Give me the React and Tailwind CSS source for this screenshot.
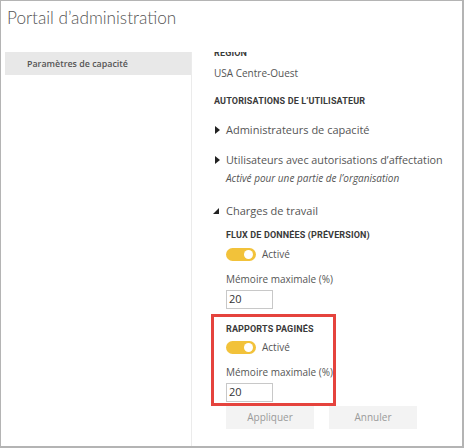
import React from "react";

const font = { fontFamily: "'Open Sans', 'Noto Sans', sans-serif" };

const Caret = ({ open }) =>
  open ? (
    <svg width="6" height="6" viewBox="0 0 6 6" className="shrink-0">
      <path d="M6 0 L6 6 L0 6 Z" fill="#222" />
    </svg>
  ) : (
    <svg width="5" height="8" viewBox="0 0 5 8" className="shrink-0">
      <path d="M0 0 L5 4 L0 8 Z" fill="#222" />
    </svg>
  );

const Toggle = () => (
  <div className="flex items-center h-[13px] gap-[6px]">
    <div className="w-[30px] h-[13px] rounded-full bg-[#f2c23a] flex items-center justify-end pr-[3px]">
      <div className="w-[9px] h-[9px] rounded-full bg-white" />
    </div>
    <span className="text-[10px] text-[#555]">Activé</span>
  </div>
);

const Memory = () => (
  <>
    <div className="mt-[11px] h-[14px] flex items-center text-[10px] text-[#555]">
      Mémoire maximale (%)
    </div>
    <div className="mt-[4px] w-[47px] h-[19px] border border-[#c8c8c8] flex items-center pl-[2px] text-[11px] text-[#333]">
      20
    </div>
  </>
);

const Heading = ({ children, className = "" }) => (
  <div
    className={`flex items-center pt-[3px] whitespace-nowrap text-[9px] font-bold uppercase tracking-[0.15px] text-[#3a3a3a] ${className}`}
    style={{ fontFamily: "Roboto, 'Liberation Sans', sans-serif" }}
  >
    {children}
  </div>
);

export default function App() {
  return (
    <div
      className="w-[464px] h-[448px] bg-white border-l border-t border-r-2 border-b-2 border-[#b4b4b4] flex flex-col"
      style={font}
    >
      {/* Title */}
      <div className="h-[51px] pl-[6px] pt-[4px] shrink-0">
        <h1
          className="text-[17.2px] font-light text-[#555] leading-[26px]"
          style={{ fontFamily: "Lato, 'Open Sans', sans-serif" }}
        >
          Portail d’administration
        </h1>
      </div>

      <div className="flex flex-1 min-h-0">
        {/* Sidebar */}
        <div className="w-[190px] pl-[4px] shrink-0">
          <div className="h-[23px] bg-[#e8e8e8] flex items-center pl-[22px] text-[8.9px] font-semibold text-[#555]">
            Paramètres de capacité
          </div>
        </div>

        {/* Main panel */}
        <div className="flex-1 border-l border-[#ebebeb] overflow-hidden pl-[22px]">
          <div className="-mt-[8px] flex flex-col">
            <Heading className="h-[16px]">Région</Heading>
            <div className="mt-[5px] h-[16px] flex items-center text-[10px] text-[#555]">
              USA Centre-Ouest
            </div>
            <Heading className="mt-[11px] h-[16px]">Autorisations de l’utilisateur</Heading>

            <div className="mt-[12px] h-[20px] flex items-center gap-[6px] pl-[1px] whitespace-nowrap">
              <Caret />
              <span className="text-[11px] text-[#555]">Administrateurs de capacité</span>
            </div>

            <div className="mt-[10px] h-[20px] flex items-center gap-[6px] pl-[1px] whitespace-nowrap">
              <Caret />
              <span className="text-[10.8px] text-[#555]">
                Utilisateurs avec autorisations d’affectation
              </span>
            </div>
            <div className="mt-[1px] h-[14px] flex items-center pl-[12px] text-[10px] italic text-[#555] whitespace-nowrap">
              Activé pour une partie de l’organisation
            </div>

            <div className="mt-[16px] h-[20px] flex items-center gap-[7px] -ml-[1px]">
              <Caret open />
              <span className="text-[11px] text-[#555]">Charges de travail</span>
            </div>

            <div className="pl-[12px] flex flex-col">
              <Heading className="mt-[6px] h-[14px]">Flux de données (préversion)</Heading>
              <div className="mt-[7px]">
                <Toggle />
              </div>
              <Memory />
            </div>

            <div className="mt-[5px] -ml-[3px] w-[125px] h-[92px] border-[3px] border-[#e5433d] pl-[12px] pt-[4px] flex flex-col">
              <Heading className="h-[14px]">Rapports paginés</Heading>
              <div className="mt-[6px]">
                <Toggle />
              </div>
              <Memory />
            </div>

            <div className="pl-[12px] flex gap-[15px]">
              <button className="w-[88px] h-[23px] bg-[#f3f3f3] text-[10px] text-[#9a9a9a]">
                Appliquer
              </button>
              <button className="w-[88px] h-[23px] bg-[#f3f3f3] text-[10px] text-[#9a9a9a]">
                Annuler
              </button>
            </div>
          </div>
        </div>
      </div>
    </div>
  );
}
